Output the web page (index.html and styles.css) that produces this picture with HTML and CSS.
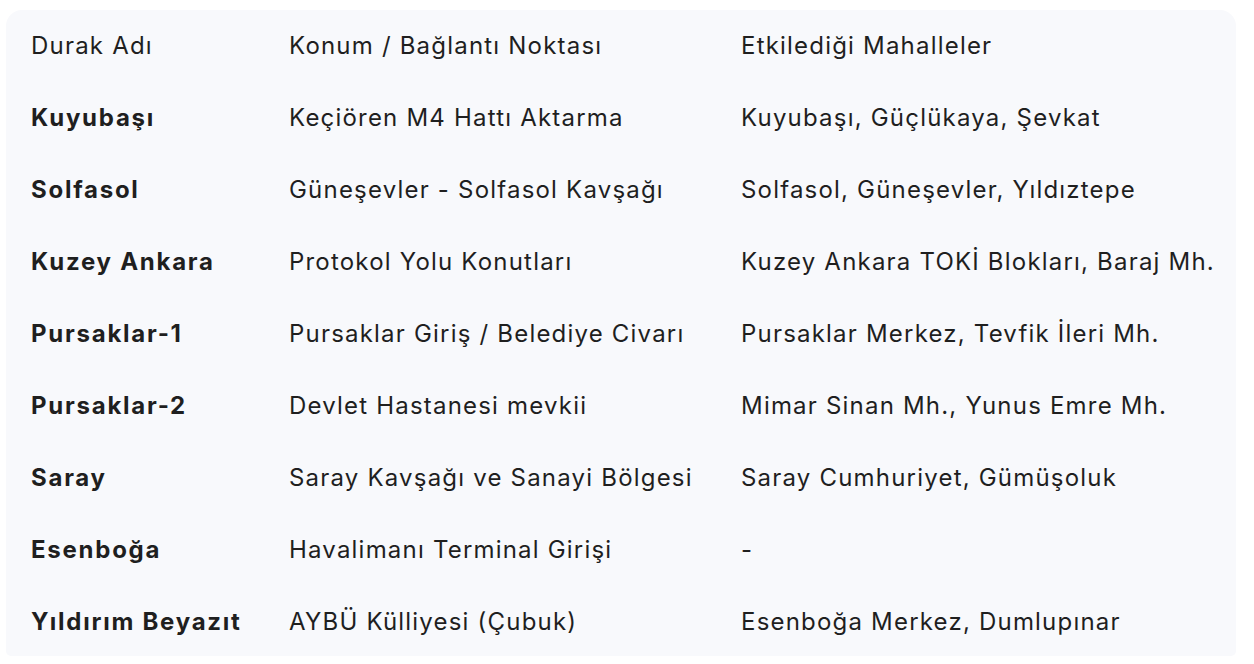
FILE: index.html
```html
<!DOCTYPE html>
<html lang="tr">
<head>
<meta charset="utf-8">
<link rel="stylesheet" href="styles.css">
</head>
<body>
<div class="card">
  <table class="stops">
    <colgroup>
      <col class="c1"><col class="c2"><col class="c3">
    </colgroup>
    <thead>
      <tr><th>Durak Adı</th><th>Konum / Bağlantı Noktası</th><th>Etkilediği Mahalleler</th></tr>
    </thead>
    <tbody>
      <tr><td class="name">Kuyubaşı</td><td>Keçiören M4 Hattı Aktarma</td><td>Kuyubaşı, Güçlükaya, Şevkat</td></tr>
      <tr><td class="name">Solfasol</td><td>Güneşevler - Solfasol Kavşağı</td><td>Solfasol, Güneşevler, Yıldıztepe</td></tr>
      <tr><td class="name">Kuzey Ankara</td><td>Protokol Yolu Konutları</td><td>Kuzey Ankara TOKİ Blokları, Baraj Mh.</td></tr>
      <tr><td class="name">Pursaklar-1</td><td>Pursaklar Giriş / Belediye Civarı</td><td>Pursaklar Merkez, Tevfik İleri Mh.</td></tr>
      <tr><td class="name">Pursaklar-2</td><td>Devlet Hastanesi mevkii</td><td>Mimar Sinan Mh., Yunus Emre Mh.</td></tr>
      <tr><td class="name">Saray</td><td>Saray Kavşağı ve Sanayi Bölgesi</td><td>Saray Cumhuriyet, Gümüşoluk</td></tr>
      <tr><td class="name">Esenboğa</td><td>Havalimanı Terminal Girişi</td><td>-</td></tr>
      <tr><td class="name">Yıldırım Beyazıt</td><td>AYBÜ Külliyesi (Çubuk)</td><td>Esenboğa Merkez, Dumlupınar</td></tr>
    </tbody>
  </table>
</div>
</body>
</html>
```

FILE: styles.css
```css
html, body {
  margin: 0;
  padding: 0;
  background: #ffffff;
}
body {
  padding: 10px 18px 0 6px;
  font-family: Inter, Roboto, sans-serif;
  color: #1f1f1f;
}
.card {
  width: 1230px;
  height: 646px;
  background: #f8f9fc;
  border-radius: 16px 16px 5px 5px;
  overflow: hidden;
}
.stops {
  border-collapse: collapse;
  table-layout: fixed;
  width: 1230px;
}
.c1 { width: 258px; }
.c2 { width: 452px; }
.c3 { width: 520px; }
.stops th,
.stops td {
  height: 72px;
  padding: 0 0 2px 25px;
  text-align: left;
  vertical-align: middle;
  font-size: 24px;
  font-weight: 400;
  letter-spacing: 1.2px;
  white-space: nowrap;
  box-sizing: border-box;
}
.stops td.name {
  font-weight: 700;
  letter-spacing: 1.75px;
}
```
